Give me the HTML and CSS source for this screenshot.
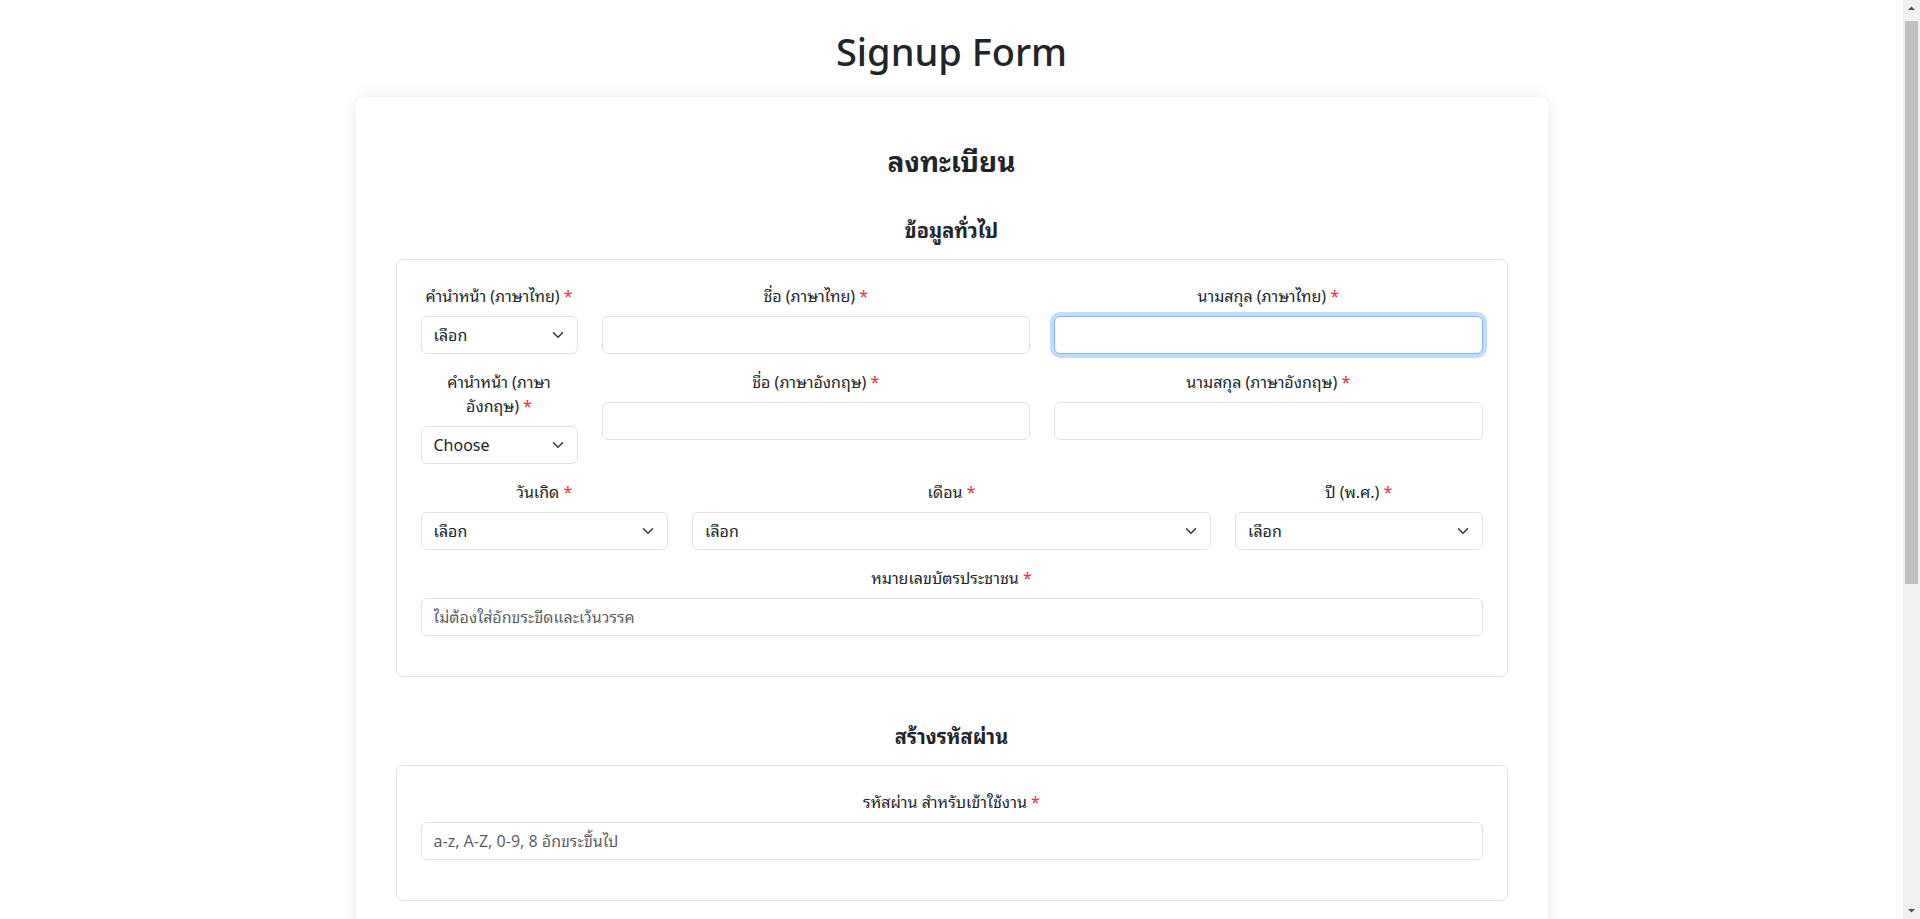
FILE: index.html
```html
<!DOCTYPE html>
<html lang="th">
<head>
<meta charset="utf-8">
<title>Signup Form</title>
<link rel="stylesheet" href="styles.css">
</head>
<body>
<h1 class="page-title">Signup Form</h1>
<main class="card">
  <h3 class="card-title">ลงทะเบียน</h3>

  <section class="section">
    <h5 class="section-title">ข้อมูลทั่วไป</h5>
    <div class="box">
      <div class="row">
        <div class="col c2">
          <label class="label">คำนำหน้า (ภาษาไทย) <span class="req">*</span></label>
          <div class="select-wrap">
            <select class="control select"><option>เลือก</option><option>นาย</option><option>นาง</option><option>นางสาว</option></select>
            <svg class="chev" viewBox="0 0 16 16"><path d="M2 5l6 6 6-6" fill="none" stroke="#343a40" stroke-width="2" stroke-linecap="round" stroke-linejoin="round"/></svg>
          </div>
        </div>
        <div class="col c5">
          <label class="label">ชื่อ (ภาษาไทย) <span class="req">*</span></label>
          <input class="control" type="text">
        </div>
        <div class="col c5">
          <label class="label">นามสกุล (ภาษาไทย) <span class="req">*</span></label>
          <input class="control focus" type="text">
        </div>

        <div class="col c2">
          <label class="label">คำนำหน้า (ภาษา<br>อังกฤษ) <span class="req">*</span></label>
          <div class="select-wrap">
            <select class="control select"><option>Choose</option><option>Mr.</option><option>Mrs.</option><option>Miss</option></select>
            <svg class="chev" viewBox="0 0 16 16"><path d="M2 5l6 6 6-6" fill="none" stroke="#343a40" stroke-width="2" stroke-linecap="round" stroke-linejoin="round"/></svg>
          </div>
        </div>
        <div class="col c5">
          <label class="label">ชื่อ (ภาษาอังกฤษ) <span class="req">*</span></label>
          <input class="control" type="text">
        </div>
        <div class="col c5">
          <label class="label">นามสกุล (ภาษาอังกฤษ) <span class="req">*</span></label>
          <input class="control" type="text">
        </div>

        <div class="col c3">
          <label class="label">วันเกิด <span class="req">*</span></label>
          <div class="select-wrap">
            <select class="control select"><option>เลือก</option></select>
            <svg class="chev" viewBox="0 0 16 16"><path d="M2 5l6 6 6-6" fill="none" stroke="#343a40" stroke-width="2" stroke-linecap="round" stroke-linejoin="round"/></svg>
          </div>
        </div>
        <div class="col c6">
          <label class="label">เดือน <span class="req">*</span></label>
          <div class="select-wrap">
            <select class="control select"><option>เลือก</option></select>
            <svg class="chev" viewBox="0 0 16 16"><path d="M2 5l6 6 6-6" fill="none" stroke="#343a40" stroke-width="2" stroke-linecap="round" stroke-linejoin="round"/></svg>
          </div>
        </div>
        <div class="col c3">
          <label class="label">ปี (พ.ศ.) <span class="req">*</span></label>
          <div class="select-wrap">
            <select class="control select"><option>เลือก</option></select>
            <svg class="chev" viewBox="0 0 16 16"><path d="M2 5l6 6 6-6" fill="none" stroke="#343a40" stroke-width="2" stroke-linecap="round" stroke-linejoin="round"/></svg>
          </div>
        </div>

        <div class="col c12">
          <label class="label">หมายเลขบัตรประชาชน <span class="req">*</span></label>
          <input class="control" type="text" placeholder="ไม่ต้องใส่อักขระขีดและเว้นวรรค">
        </div>
      </div>
    </div>
  </section>

  <section class="section">
    <h5 class="section-title">สร้างรหัสผ่าน</h5>
    <div class="box">
      <div class="row">
        <div class="col c12">
          <label class="label">รหัสผ่าน สำหรับเข้าใช้งาน <span class="req">*</span></label>
          <input class="control" type="password" placeholder="a-z, A-Z, 0-9, 8 อักขระขึ้นไป">
        </div>
      </div>
    </div>
  </section>

  <section class="section">
    <h5 class="section-title">ข้อมูลการติดต่อ</h5>
    <div class="box">
      <div class="row">
        <div class="col c6">
          <label class="label">อีเมล <span class="req">*</span></label>
          <input class="control" type="email" placeholder="name@example.com">
        </div>
        <div class="col c6">
          <label class="label">เบอร์โทรศัพท์มือถือ <span class="req">*</span></label>
          <input class="control" type="text" placeholder="0812345678">
        </div>
        <div class="col c12">
          <label class="label">ที่อยู่ <span class="req">*</span></label>
          <input class="control" type="text">
        </div>
      </div>
    </div>
  </section>

  <div class="consent">
    <label class="check"><input type="checkbox"> ข้าพเจ้ายอมรับเงื่อนไขการใช้งาน</label>
  </div>
  <div class="actions">
    <button class="btn" type="submit">ลงทะเบียน</button>
  </div>
</main>

<div class="scrollbar" aria-hidden="true">
  <span class="sb-btn"><svg viewBox="0 0 17 17" width="17" height="17"><polygon points="5,10 8.5,6.5 12,10" fill="#505050"/></svg></span>
  <span class="sb-thumb"></span>
  <span class="sb-btn sb-down"><svg viewBox="0 0 17 17" width="17" height="17"><polygon points="5,7 8.5,10.5 12,7" fill="#505050"/></svg></span>
</div>
</body>
</html>
```

FILE: styles.css
```css
* { box-sizing: border-box; }

body {
  margin: 0;
  padding-right: 17px;
  font-family: "Noto Sans", "Noto Sans Thai Looped", "Loma", "Garuda", "Tahoma", "Leelawadee UI", "Noto Sans Thai", sans-serif;
  font-size: 16px;
  line-height: 1.5;
  color: #212529;
  background: #fff;
}

.page-title {
  margin: 27px 0 22px;
  text-align: center;
  font-size: 38px;
  font-weight: 500;
  line-height: 48px;
}

.card {
  width: 1192px;
  margin: 0 auto 48px;
  padding: 48px 40px;
  background: #fff;
  border-radius: 8px;
  box-shadow: 0 0 15px rgba(0, 0, 0, 0.1);
}

.card-title {
  margin: 0 0 40px;
  text-align: center;
  font-size: 28px;
  font-weight: 700;
  line-height: 1.2;
}

.section { margin-bottom: 48px; }

.section-title {
  margin: 0 0 16px;
  text-align: center;
  font-size: 20px;
  font-weight: 700;
  line-height: 1.2;
}

.box {
  border: 1px solid #dee2e6;
  border-radius: 6px;
  padding: 24px;
}

.row {
  display: flex;
  flex-wrap: wrap;
  margin: 0 -12px;
}

.col {
  padding: 0 12px;
  margin-bottom: 16px;
}

.c2 { flex: 0 0 16.6667%; max-width: 16.6667%; }
.c3 { flex: 0 0 25%; max-width: 25%; }
.c4 { flex: 0 0 33.3333%; max-width: 33.3333%; }
.c5 { flex: 0 0 41.6667%; max-width: 41.6667%; }
.c6 { flex: 0 0 50%; max-width: 50%; }
.c12 { flex: 0 0 100%; max-width: 100%; }

.label {
  display: block;
  margin-bottom: 8px;
  text-align: center;
}

.req { color: #dc3545; }

.control {
  display: block;
  width: 100%;
  height: 38px;
  margin: 0;
  padding: 6px 12px;
  font: inherit;
  color: #212529;
  background: #fff;
  border: 1px solid #dee2e6;
  border-radius: 6px;
  outline: 0;
  -webkit-appearance: none;
  appearance: none;
}

.control::placeholder { color: rgba(33, 37, 41, 0.75); }

.control.focus {
  border-color: #86b7fe;
  box-shadow: 0 0 0 4px rgba(13, 110, 253, 0.25);
}

.select-wrap { position: relative; }

.select { padding-right: 36px; }

.chev {
  position: absolute;
  right: 12px;
  top: 13px;
  width: 16px;
  height: 12px;
  pointer-events: none;
}

.consent {
  text-align: center;
  margin-bottom: 24px;
}

.check input { margin-right: 6px; }

.actions { text-align: center; }

.btn {
  font: inherit;
  color: #fff;
  background: #0d6efd;
  border: 1px solid #0d6efd;
  border-radius: 6px;
  padding: 6px 32px;
}

/* static picture of the window's classic scrollbar */
.scrollbar {
  position: fixed;
  top: 0;
  right: 0;
  width: 17px;
  height: 100vh;
  display: flex;
  flex-direction: column;
  background: #f1f1f1;
}

.sb-btn {
  display: block;
  width: 17px;
  height: 17px;
  flex: none;
}

.sb-btn svg { display: block; }

.sb-thumb {
  display: block;
  flex: none;
  margin: 4px 2px 0;
  height: 563px;
  background: #c1c1c1;
}

.sb-down { margin-top: auto; }
```
